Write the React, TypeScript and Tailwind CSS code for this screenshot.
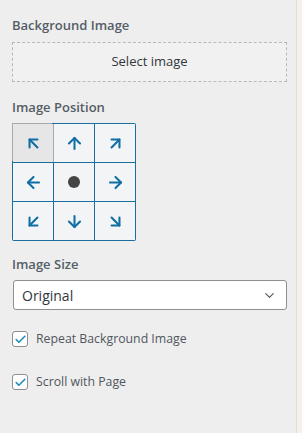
import {
  ArrowUpLeft,
  ArrowUp,
  ArrowUpRight,
  ArrowLeft,
  ArrowRight,
  ArrowDownLeft,
  ArrowDown,
  ArrowDownRight,
  ChevronDown,
  Check,
} from "lucide-react";

const cells = [
  { icon: ArrowUpLeft, active: true },
  { icon: ArrowUp },
  { icon: ArrowUpRight },
  { icon: ArrowLeft },
  { icon: null },
  { icon: ArrowRight },
  { icon: ArrowDownLeft },
  { icon: ArrowDown },
  { icon: ArrowDownRight },
];

function Checkbox({ label }: { label: string }) {
  return (
    <label className="flex items-center gap-[8px] h-[20px]">
      <span className="w-[16px] h-[16px] bg-white border border-[#8c8f94] rounded-[3px] flex items-center justify-center">
        <Check size={13} strokeWidth={3} className="text-[#1e8cbe]" />
      </span>
      <span className="text-[12.3px] text-[#50575e]">{label}</span>
    </label>
  );
}

export default function App() {
  return (
    <div className="w-[302px] h-[433px] flex bg-[#f5f1ea] font-['Open_Sans',sans-serif]">
      <div className="w-[297px] h-full bg-[#eeeeee] border-r border-[#e3ded6] px-[12px] pt-[15px]">
        <h3 className="text-[13px] font-semibold text-[#555d66] leading-[20px]">Background Image</h3>
        <button className="mt-[7px] w-[275px] h-[40px] border border-dashed border-[#b4b9be] bg-[#f1f1f2] text-[13px] text-[#32373c]">
          Select image
        </button>

        <h3 className="mt-[15px] text-[13px] font-semibold text-[#555d66] leading-[20px]">Image Position</h3>
        <div className="mt-[6px] grid grid-cols-[40px_40px_40px] gap-px p-px bg-[#1a6fa0] w-fit rounded-[2px]">
          {cells.map((c, i) => {
            const Icon = c.icon;
            return (
              <div
                key={i}
                className={`h-[38px] flex items-center justify-center ${
                  c.active
                    ? "bg-[#e6e6e6] shadow-[-1px_-1px_0_0_#a7aaad,1px_0_0_0_#a7aaad]"
                    : "bg-[#f3f4f5]"
                }`}
              >
                {Icon ? (
                  <Icon size={19} strokeWidth={2.6} className="text-[#0f6ea3]" />
                ) : (
                  <span className="w-[12px] h-[12px] rounded-full bg-[#444444]" />
                )}
              </div>
            );
          })}
        </div>

        <h3 className="mt-[13px] text-[13px] font-semibold text-[#555d66] leading-[20px]">Image Size</h3>
        <div className="mt-[6px] ml-px w-[274px] h-[30px] bg-white border border-[#8c8f94] rounded-[3px] flex items-center justify-between pl-[8px] pr-[9px]">
          <span className="text-[14px] text-[#32373c]">Original</span>
          <ChevronDown size={15} strokeWidth={1.8} className="text-[#50575e]" />
        </div>

        <div className="mt-[19px] flex flex-col gap-[23px]">
          <Checkbox label="Repeat Background Image" />
          <Checkbox label="Scroll with Page" />
        </div>
      </div>
    </div>
  );
}
